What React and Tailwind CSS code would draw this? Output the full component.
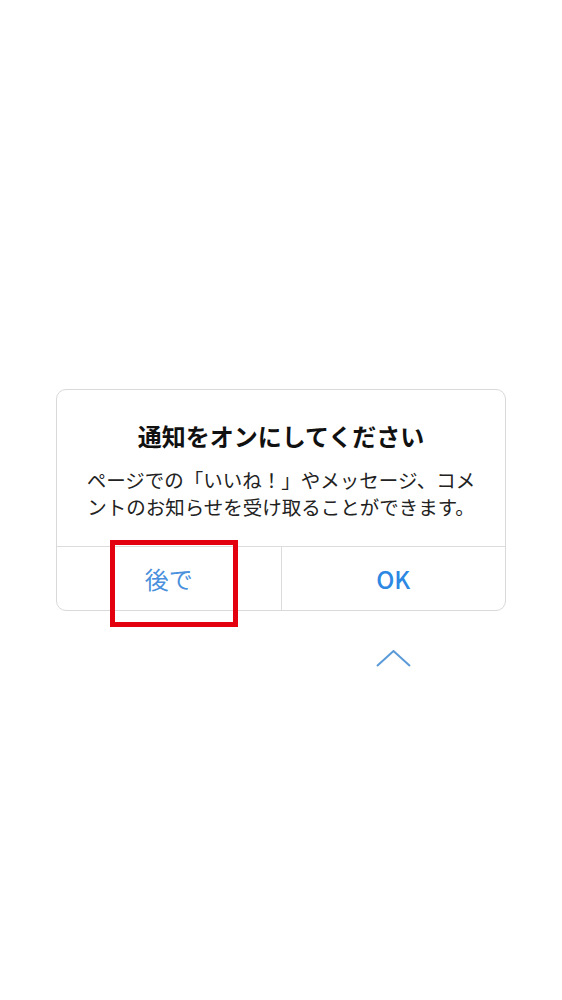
import React from "react";

const jp = { fontFamily: '"Noto Sans CJK JP", "Noto Sans", sans-serif' };

const App = () => {
    return (
        <div className="w-[562px] h-[1000px] bg-white pt-[389px]" style={jp}>
            {/* Alert card */}
            <div className="ml-[56px] w-[450px] border border-[#d9d9d9] rounded-[10px] bg-white">
                <div className="px-[26px] pt-[31px] pb-[26px] text-center">
                    <h2 className="text-[24px] leading-[30px] font-bold text-[#111]">
                        通知をオンにしてください
                    </h2>
                    <p className="mt-[15px] text-[19.5px] leading-[27px] text-[#222]">
                        ページでの「いいね！」やメッセージ、コメントのお知らせを受け取ることができます。
                    </p>
                </div>
                <div className="flex h-[64px] border-t border-[#dcdcdc]">
                    <div className="relative flex-1 flex items-center justify-center border-r border-[#dcdcdc]">
                        <span className="text-[24px] text-[#4a90dc]">後で</span>
                        {/* highlight box */}
                        <div className="absolute left-[53px] top-[-7px] w-[128px] h-[87px] border-[5px] border-[#e3000f]" />
                    </div>
                    <button className="flex-1 flex items-center justify-center text-[24px] font-medium text-[#2d88e3]">
                        OK
                    </button>
                </div>
            </div>

            {/* scroll hint */}
            <div className="ml-[56px] w-[450px] mt-[39px] flex">
                <div className="flex-1" />
                <div className="flex-1 flex justify-center">
                    <svg width="36" height="20" viewBox="0 0 36 20" fill="none">
                        <path d="M1 16 L17.5 1 L34 16" stroke="#5b9ad8" strokeWidth="2" />
                    </svg>
                </div>
            </div>
        </div>
    );
};

export default App;
